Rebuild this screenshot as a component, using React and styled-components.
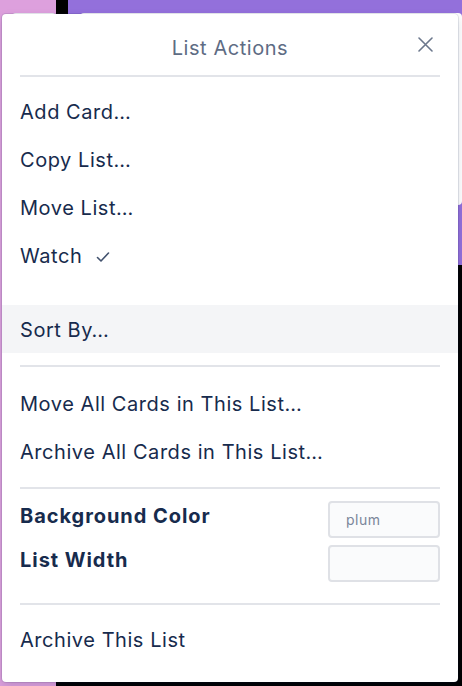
import React from 'react'
import styled, { createGlobalStyle } from 'styled-components'

const GlobalStyle = createGlobalStyle`
  html, body { margin: 0; padding: 0; }
  body {
    font-family: Inter, "Noto Sans", "Liberation Sans", sans-serif;
    -webkit-font-smoothing: antialiased;
  }
`

const App = () => {
  return (
    <>
      <GlobalStyle />
      <Board>
        <List $bg="#dda0dd" $w="56px" $h="686px">
          <Card $h="40px" />
        </List>
        <List $bg="#9370db" $grow $h="265px">
          <Card $h="192px" />
        </List>

        <Popup>
          <Header>
            <Title>List Actions</Title>
            <Close aria-label="close">
              <svg width="15" height="15" viewBox="0 0 15 15">
                <path d="M1 1 L14 14 M14 1 L1 14" stroke="#6b778c" strokeWidth="1.6" strokeLinecap="round" />
              </svg>
            </Close>
          </Header>
          <Divider />

          <Section $pt="10px">
            <Item>Add Card…</Item>
            <Item>Copy List…</Item>
            <Item>Move List…</Item>
            <Item>
              Watch
              <Check width="14" height="12" viewBox="0 0 14 12">
                <polyline points="1.5,6.5 5,10 12.5,2" fill="none" stroke="#42526e" strokeWidth="1.6" strokeLinecap="round" strokeLinejoin="round" />
              </Check>
            </Item>
          </Section>

          <Section $pt="26px" $pb="12px">
            <Item $hover>Sort By…</Item>
          </Section>
          <Divider />

          <Section $pt="12px" $pb="12px">
            <Item>Move All Cards in This List…</Item>
            <Item>Archive All Cards in This List…</Item>
          </Section>
          <Divider />

          <Fields>
            <FieldRow>
              <Label>Background Color</Label>
              <Input placeholder="plum" />
            </FieldRow>
            <FieldRow>
              <Label>List Width</Label>
              <Input />
            </FieldRow>
          </Fields>
          <Divider />

          <Section $pt="10px" $pb="20px">
            <Item>Archive This List</Item>
          </Section>
        </Popup>
      </Board>
    </>
  )
}

export default App


const Board = styled.div`
position: relative;
display: flex;
align-items: flex-start;
gap: 12px;
height: 686px;
overflow: hidden;
background-color: #000;
`

const List = styled.div`
width: ${p => p.$w || 'auto'};
flex: ${p => p.$grow ? '1' : 'none'};
height: ${p => p.$h};
background-color: ${p => p.$bg};
padding: 13px 0 0 12px;
box-sizing: border-box;
`

const Card = styled.div`
height: ${p => p.$h};
background-color: #fff;
border-radius: 4px;
`

const Popup = styled.div`
position: absolute;
left: 2px;
top: 14px;
width: 456px;
height: 668px;
box-sizing: border-box;
background-color: #fff;
border-radius: 4px;
box-shadow: 0 0 0 1px rgba(9, 30, 66, 0.1), 0 4px 10px rgba(9, 30, 66, 0.15);
display: flex;
flex-direction: column;
`

const Header = styled.div`
position: relative;
height: 61px;
flex: none;
display: flex;
align-items: center;
justify-content: center;
`

const Title = styled.div`
font-size: 20px;
letter-spacing: 0.55px;
color: #5e6c84;
padding-top: 6px;
`

const Close = styled.button`
position: absolute;
right: 25px;
top: 23px;
padding: 0;
border: none;
background: none;
display: flex;
cursor: pointer;
`

const Divider = styled.div`
height: 2px;
margin: 0 18px;
background-color: #e2e4e9;
flex: none;
`

const Section = styled.div`
padding-top: ${p => p.$pt || '0'};
padding-bottom: ${p => p.$pb || '0'};
`

const Item = styled.div`
height: 48px;
box-sizing: border-box;
display: flex;
align-items: center;
padding: 2px 18px 0;
font-size: 20px;
letter-spacing: 0.55px;
color: #172b4d;
background-color: ${p => p.$hover ? '#f4f5f7' : 'transparent'};
cursor: pointer;
`

const Check = styled.svg`
margin-left: 14px;
margin-top: 1px;
`

const Fields = styled.div`
padding: 12px 18px 21px;
display: flex;
flex-direction: column;
gap: 7px;
`

const FieldRow = styled.div`
display: flex;
align-items: flex-start;
justify-content: space-between;
`

const Label = styled.div`
font-size: 20px;
font-weight: 700;
letter-spacing: 0.95px;
color: #172b4d;
padding-top: 3px;
`

const Input = styled.input`
width: 112px;
height: 37px;
box-sizing: border-box;
border: 2px solid #dfe1e6;
border-radius: 4px;
background-color: #fafbfc;
padding: 0 16px;
font-family: inherit;
font-size: 14px;
letter-spacing: 0.5px;
color: #172b4d;
outline: none;

&::placeholder {
    color: #7a869a;
}
`
